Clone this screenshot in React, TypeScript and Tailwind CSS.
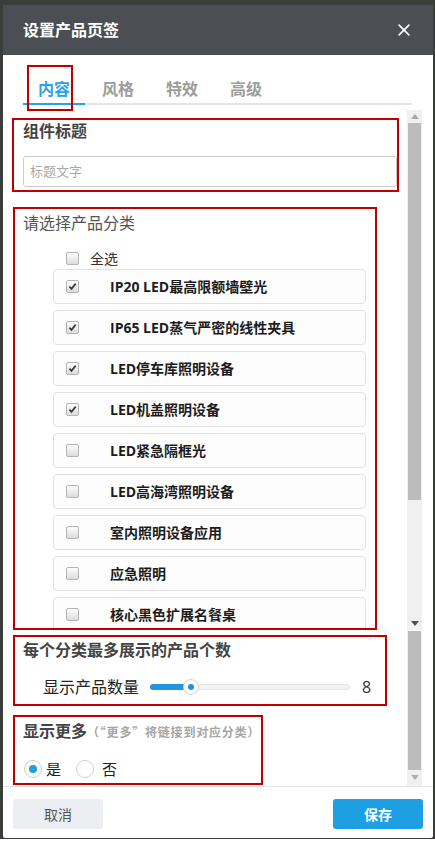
import React from 'react'

const categories = [
  { name: 'IP20 LED最高限额墙壁光', checked: true },
  { name: 'IP65 LED蒸气严密的线性夹具', checked: true },
  { name: 'LED停车库照明设备', checked: true },
  { name: 'LED机盖照明设备', checked: true },
  { name: 'LED紧急隔框光', checked: false },
  { name: 'LED高海湾照明设备', checked: false },
  { name: '室内照明设备应用', checked: false },
  { name: '应急照明', checked: false },
  { name: '核心黑色扩展名餐桌', checked: false },
]

function Check({ checked }: { checked: boolean }) {
  return (
    <span className="flex h-[13px] w-[13px] shrink-0 items-center justify-center rounded-[2px] border border-[#b4b4b4] bg-linear-to-b from-[#fdfdfd] to-[#dcdcdc]">
      {checked && (
        <svg width="9" height="9" viewBox="0 0 9 9">
          <path d="M1.4 4.6 L3.5 6.9 L7.7 1.6" stroke="#3a3a3a" strokeWidth="1.7" fill="none" />
        </svg>
      )}
    </span>
  )
}

function Radio({ checked }: { checked: boolean }) {
  return (
    <span className="flex h-[18px] w-[18px] shrink-0 items-center justify-center rounded-full border border-[#cfcfcf] bg-white">
      {checked && <span className="h-[8px] w-[8px] rounded-full bg-[#1e9ee3]" />}
    </span>
  )
}

function Arrow({ up, color }: { up?: boolean; color: string }) {
  return (
    <svg width="8" height="5" viewBox="0 0 8 5">
      <path d={up ? 'M0 5 L4 0 L8 5 Z' : 'M0 0 L8 0 L4 5 Z'} fill={color} />
    </svg>
  )
}

export default function App() {
  return (
    <div className="h-[856px] w-[435px] bg-white font-['Open_Sans','Noto_Sans_CJK_SC',sans-serif]">
      <div className="h-[839px] bg-[#3b3d3a] pl-[3px] pr-[2px] pt-[5px]">
        <div className="flex h-[833px] flex-col overflow-hidden rounded-b-[2px] bg-white">
          {/* header */}
          <div className="flex h-[50px] shrink-0 items-center justify-between bg-[#4b4e55] pl-[20px] pr-[23px]">
            <span className="text-[16px] font-bold text-white">设置产品页签</span>
            <svg width="12" height="12" viewBox="0 0 12 12">
              <path d="M0.6 0.6 L11.4 11.4 M11.4 0.6 L0.6 11.4" stroke="#fff" strokeWidth="1.6" />
            </svg>
          </div>

          {/* tabs */}
          <div className="h-[50px] shrink-0 pt-[20px]">
            <div className="ml-[20px] flex w-[389px] border-b-2 border-[#e6e6e6]">
              <div className="relative -mb-[2px] h-[30px] w-[62px] border-b-2 border-[#29a3e6] pl-[15px] text-[16px] font-bold leading-[28px] text-[#29a3e6]">
                内容
                <div className="absolute left-[4px] top-[-10px] h-[46px] w-[46px] border-2 border-[#c00000]" />
              </div>
              <div className="h-[28px] w-[64px] pl-[17px] text-[16px] font-bold leading-[28px] text-[#9c9c9c]">风格</div>
              <div className="h-[28px] w-[64px] pl-[17px] text-[16px] font-bold leading-[28px] text-[#9c9c9c]">特效</div>
              <div className="h-[28px] w-[64px] pl-[17px] text-[16px] font-bold leading-[28px] text-[#9c9c9c]">高级</div>
            </div>
          </div>

          {/* body */}
          <div className="flex h-[681px] shrink-0">
            <div className="flex w-[404px] flex-col pl-[9px]">
              {/* title section */}
              <div className="mt-[13px] h-[74px] w-[387px] border-2 border-[#c00000] pl-[9px]">
                <div className="text-[16px] font-bold leading-[22px] text-[#444]">组件标题</div>
                <div className="mt-[14px] flex h-[31px] items-center rounded-[3px] border border-[#cccccc] pl-[6px] text-[13px] text-[#aaa]">
                  标题文字
                </div>
              </div>

              {/* category section */}
              <div className="ml-[1px] mt-[15px] flex h-[423px] w-[364px] flex-col border-2 border-[#c00000]">
                <div className="pl-[8px] pt-[3px] text-[16px] leading-[22px] text-[#555]">请选择产品分类</div>
                <div className="ml-[51px] mt-[14px] flex h-[20px] items-center gap-[11px] text-[14px] text-[#333]">
                  <Check checked={false} />
                  全选
                </div>
                <div className="mt-[1px] flex flex-1 flex-col gap-[6px] overflow-hidden">
                  {categories.map((c) => (
                    <div
                      key={c.name}
                      className="ml-[38px] flex h-[35px] w-[313px] shrink-0 items-center rounded-[4px] border border-[#e2e2e2] bg-[#fdfdfd] pl-[12px]"
                    >
                      <Check checked={c.checked} />
                      <span className="ml-[31px] text-[14px] font-bold text-[#1c1c1c]">{c.name}</span>
                    </div>
                  ))}
                </div>
              </div>

              {/* count section */}
              <div className="ml-[1px] mt-[5px] h-[71px] w-[374px] border-2 border-[#c00000] pl-[8px] pt-[2px]">
                <div className="text-[16px] font-bold leading-[22px] text-[#444]">每个分类最多展示的产品个数</div>
                <div className="mt-[15px] flex h-[22px] items-center pl-[20px]">
                  <span className="w-[96px] shrink-0 whitespace-nowrap text-[16px] text-[#222]">显示产品数量</span>
                  <div className="relative ml-[11px] h-[6px] w-[200px] shrink-0 rounded-full border border-[#e3e3e3] bg-[#f3f3f3]">
                    <div className="absolute left-[-1px] top-[-1px] h-[6px] w-[42px] rounded-full bg-[#2196e0]" />
                    <div className="absolute left-[32px] top-[-6px] flex h-[16px] w-[16px] items-center justify-center rounded-full border border-[#d4d4d4] bg-white">
                      <span className="h-[6px] w-[6px] rounded-full bg-[#1e90dc]" />
                    </div>
                  </div>
                  <span className="ml-[12px] text-[16px] text-[#333]">8</span>
                </div>
              </div>

              {/* more section */}
              <div className="ml-[1px] mt-[9px] h-[70px] w-[250px] border-2 border-[#c00000] pl-[8px] pt-[3px]">
                <div className="flex items-baseline whitespace-nowrap leading-[22px]">
                  <span className="text-[16px] font-bold text-[#444]">显示更多</span>
                  <span className="font-['Noto_Sans_CJK_SC',sans-serif] text-[12px] font-bold tracking-[0.8px] text-[#a6a6a6]">
                    （“更多”将链接到对应分类）
                  </span>
                </div>
                <div className="ml-[1px] mt-[16px] flex h-[20px] items-center text-[15px] text-[#222]">
                  <Radio checked />
                  <span className="ml-[4px]">是</span>
                  <span className="ml-[15px]">
                    <Radio checked={false} />
                  </span>
                  <span className="ml-[8px]">否</span>
                </div>
              </div>
            </div>

            {/* scrollbars */}
            <div className="flex w-[15px] flex-col pt-[5px]">
              <div className="flex h-[520px] flex-col items-center bg-[#f0f0f0]">
                <div className="flex h-[13px] items-center">
                  <Arrow up color="#a9a9a9" />
                </div>
                <div className="h-[377px] w-[13px] bg-[#bcbcbc]" />
                <div className="flex-1" />
                <div className="flex h-[13px] items-center">
                  <Arrow color="#4f4f4f" />
                </div>
              </div>
              <div className="mt-[1px] flex h-[155px] flex-col items-center bg-[#f0f0f0]">
                <div className="h-[139px] w-[13px] bg-[#bcbcbc]" />
                <div className="flex h-[14px] items-center">
                  <Arrow color="#b0b0b0" />
                </div>
              </div>
            </div>
          </div>

          {/* footer */}
          <div className="flex h-[52px] shrink-0 justify-between border-t border-[#e5e5e5] px-[10px] pt-[12px]">
            <div className="flex h-[30px] w-[90px] items-center justify-center rounded-[3px] bg-[#eceef1] text-[14px] text-[#555]">
              取消
            </div>
            <div className="flex h-[30px] w-[90px] items-center justify-center rounded-[3px] bg-[#1e9ee3] text-[14px] font-bold text-white">
              保存
            </div>
          </div>
        </div>
      </div>
    </div>
  )
}
